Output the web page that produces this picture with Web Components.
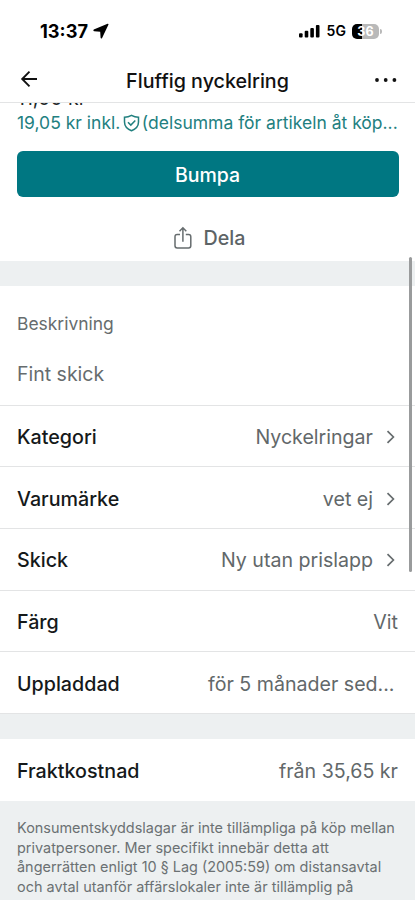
<!DOCTYPE html>
<html lang="sv"><head><meta charset="utf-8"><title>Fluffig nyckelring</title>
<style>body{margin:0;background:#fff}</style></head><body>
<item-screen></item-screen>
<script>
const define=(name,css,html)=>customElements.define(name,class extends HTMLElement{
  constructor(){super();this.attachShadow({mode:'open'}).innerHTML=`<style>*{box-sizing:border-box}${css}</style>${html}`;}
});

define('status-bar',`
:host{display:flex;height:56px;padding:6px 33.5px 0 40px;align-items:center;color:#000;font-weight:700;font-size:18.2px}
.time{line-height:20px}
.nav{margin:0 auto 0 5.5px}
.bars{margin:0 7px 0 0}
.net{font-size:14px;font-weight:600;line-height:20px;margin-right:6px}
.bat{width:27px;height:15px;border-radius:5px;background:linear-gradient(90deg,#000 36%,#b9b9b9 36%);color:#fff;font-size:12.5px;line-height:15px;text-align:center}
.cap{width:1.6px;height:5px;margin-left:1px;border-radius:0 2px 2px 0;background:#b9b9b9}
svg{display:block}`,`
<span class="time">13:37</span>
<svg class="nav" width="16" height="16" viewBox="0 0 16 16"><path d="M14.6.7.8 6.6Q-.2 7.700 1.200 8.300L7.200 8.800 7.600 14.700Q8 16 9.100 14.900L15.500 1.600Q15.600.4 14.600.7Z" fill="#000"/></svg>
<svg class="bars" width="21" height="14" viewBox="0 0 21 14"><rect x="0" y="9.2" width="3.6" height="4.300" rx="1"/><rect x="5.700" y="6.800" width="3.600" height="6.700" rx="1"/><rect x="11.300" y="4" width="3.600" height="9.500" rx="1"/><rect x="16.900" y="1" width="3.600" height="12.500" rx="1"/></svg>
<span class="net">5G</span><span class="bat">36</span><i class="cap"></i>`);

define('nav-bar',`
:host{display:grid;grid-template-columns:40px 1fr 40px;align-items:center;height:47px;padding:0 17px;border-bottom:1px solid #e3e4e5;background:#fff;position:relative;z-index:1}
.title{font-size:19.7px;font-weight:500;line-height:24px;text-align:center;color:#111;padding-top:3px}
svg{display:block;margin-top:-1px}.more{justify-self:end;margin-top:1px}`,`
<svg width="24" height="20" viewBox="0 0 24 20" fill="none" stroke="#111" stroke-width="1.9"><path d="M20 10H5.200M12.500 2.700 5.200 10l7.300 7.300"/></svg>
<span class="title"><slot></slot></span>
<svg class="more" width="24" height="6" viewBox="0 0 24 6" fill="#111"><circle cx="3" cy="3" r="1.900"/><circle cx="11.700" cy="3" r="1.900"/><circle cx="20.400" cy="3" r="1.900"/></svg>`);

define('price-block',`
:host{display:block;height:48px;padding:0 17px}
.price{height:10px;padding-bottom:5px;display:flex;align-items:flex-end;font-size:19.5px;line-height:20px;color:#222728}
.total{display:flex;align-items:center;height:20px;font-size:17.500px;line-height:20px;color:#22807f;white-space:nowrap}
svg{display:block;margin:-1px 1.500px 0 3px;flex:none}`,`
<div class="price"><slot name="price"></slot></div>
<div class="total"><slot name="total"></slot><svg width="17" height="18" viewBox="0 0 17 18" fill="none" stroke="#22807f" stroke-width="1.500"><path d="M8.500 1.300Q11.700 3.100 15.500 3.300V8Q15.500 14 8.500 16.700 1.500 14 1.500 8V3.300Q5.300 3.100 8.500 1.300Z"/><path d="m5 8.300 2.800 2.800L12.300 6.500"/></svg><slot></slot></div>`);

define('primary-button',`
:host{display:block;padding:0 16.500px}
button{display:block;width:100%;height:46px;border:0;border-radius:6px;background:#007782;color:#fff;font:500 19.500px/46px Inter,sans-serif;padding:1px 0 0}`,`<button><slot></slot></button>`);

define('share-action',`
:host{display:flex;height:64px;align-items:center;justify-content:center;gap:12px;padding:18px 0 0 4px;font-size:19.700px;font-weight:500;line-height:24px;color:#5d6466}
svg{display:block;margin-top:-1px}`,`
<svg width="18" height="24" viewBox="0 0 18 24" fill="none" stroke="#666c6e" stroke-width="1.500"><path d="M6 8.500H3.200Q1 8.500 1 10.700V19.800Q1 22 3.200 22H14.600Q16.800 22 16.800 19.800V10.700Q16.800 8.500 14.600 8.500H11.800M8.900 15.800V1.800M5.500 5.200 8.900 1.800l3.400 3.400"/></svg><slot></slot>`);

define('section-gap',`:host{display:block;height:25px;background:#edf0f1}`,``);

define('item-description',`
:host{display:block;height:119.700px;padding:26.500px 17px 0;border-bottom:1px solid #e3e4e5;color:#666c6e}
.h{font-size:17.450px;line-height:22px}
.b{font-size:19.500px;line-height:24px;margin-top:27.500px}`,`<div class="h"><slot name="heading"></slot></div><div class="b"><slot></slot></div>`);

define('detail-row',`
:host{display:flex;height:61.700px;align-items:center;padding:2px 17px 0;border-bottom:1px solid #e3e4e5;font-size:19.600px;line-height:24px;white-space:nowrap}
:host([last]){border-bottom:0}
.l{font-weight:500;font-size:19.700px;color:#15191a;margin-right:auto}
.v{color:#62686a}
:host([cut]) .v{margin-right:3.500px}
svg{display:none;margin-left:13px;margin-right:2px}
:host([link]) svg{display:block}`,`
<span class="l"><slot name="label"></slot></span><span class="v"><slot></slot></span>
<svg width="10" height="14" viewBox="0 0 10 14" fill="none" stroke="#666c6e" stroke-width="1.700"><path d="m1.500 1.200 5.900 5.800-5.900 5.800"/></svg>`);

define('legal-note',`
:host{display:block;height:99px;overflow:hidden;padding:17px 17px 0;background:#edf0f1;color:#6b7173;font-size:14.440px;line-height:19.700px;white-space:nowrap}`,`<slot></slot>`);

define('scroll-thumb',`:host{position:absolute;z-index:2;left:409px;top:257px;width:3px;height:315px;border-radius:2px;background:#999b9c}`,``);

define('item-screen',`
:host{display:block;position:relative;width:415px;height:900px;overflow:hidden;background:#fff;font-family:Inter,"Liberation Sans",sans-serif}`,`
<status-bar></status-bar>
<nav-bar>Fluffig nyckelring</nav-bar>
<price-block><span slot="price">11,00 kr</span><span slot="total">19,05 kr inkl.</span>(delsumma för artikeln åt köp...</price-block>
<primary-button>Bumpa</primary-button>
<share-action>Dela</share-action>
<section-gap></section-gap>
<item-description><span slot="heading">Beskrivning</span>Fint skick</item-description>
<detail-row link><span slot="label">Kategori</span>Nyckelringar</detail-row>
<detail-row link><span slot="label">Varumärke</span>vet ej</detail-row>
<detail-row link><span slot="label">Skick</span>Ny utan prislapp</detail-row>
<detail-row><span slot="label">Färg</span>Vit</detail-row>
<detail-row cut><span slot="label">Uppladdad</span>för 5 månader sed...</detail-row>
<section-gap></section-gap>
<detail-row last><span slot="label">Fraktkostnad</span>från 35,65 kr</detail-row>
<legal-note>Konsumentskyddslagar är inte tillämpliga på köp mellan<br>privatpersoner. Mer specifikt innebär detta att<br>ångerrätten enligt 10 § Lag (2005:59) om distansavtal<br>och avtal utanför affärslokaler inte är tillämplig på</legal-note>
<scroll-thumb></scroll-thumb>`);
</script></body></html>
